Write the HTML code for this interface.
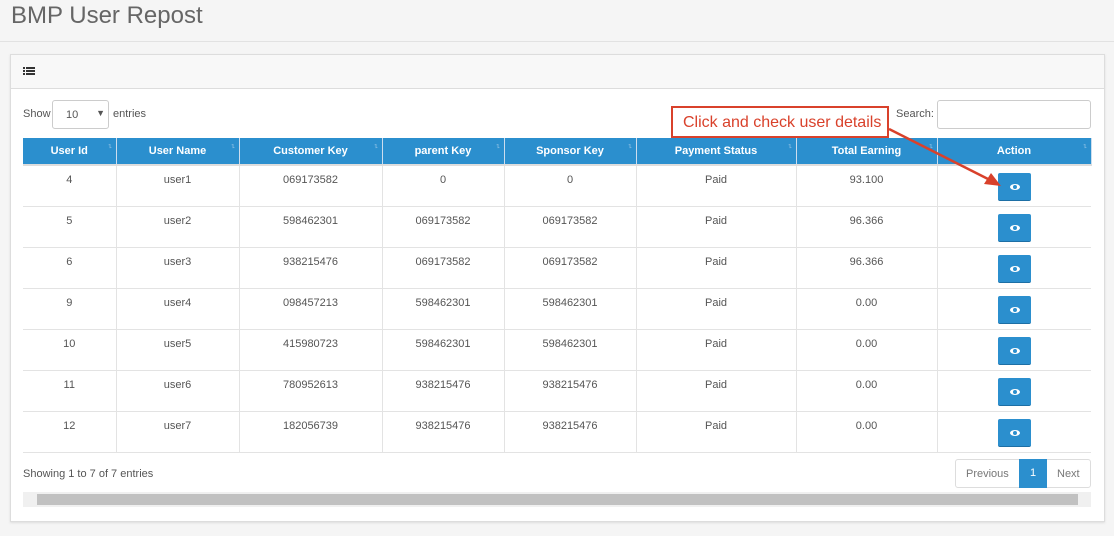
<!DOCTYPE html><html><head><style>
body{margin:0;width:1114px;height:536px;background:#f5f5f5;font-family:"Liberation Sans",sans-serif;position:relative;overflow:hidden;color:#555}
.t{position:absolute;left:11px;top:2px;font-size:24px;color:#666;}
.hl{position:absolute;left:0;top:41px;width:1114px;height:1px;background:#e2e2e2}
.p{position:absolute;left:10px;top:54px;width:1093px;height:466px;background:#fff;border:1px solid #ddd;box-shadow:0 1px 2px #ddd}
.ph{position:absolute;left:0;top:0;width:1093px;height:33px;background:#f8f8f8;border-bottom:1px solid #ddd}
.a{position:absolute;font-size:11px;color:#555}
table{position:absolute;left:23px;top:138px;border-collapse:collapse;font-size:11px;width:1068px;table-layout:fixed}
th{background:#2b8fce;color:#fff;height:26px;border-right:1px solid #cde;font-weight:bold;text-align:center;padding:0;border-bottom:2px solid #ddd;position:relative}
th:after{content:"↑↓";position:absolute;right:5px;top:5px;font-size:7px;color:#9cc8e8;letter-spacing:-2px}
td{height:41px;border:1px solid #e3e3e3;text-align:center;vertical-align:top;padding:8px 0 0;box-sizing:border-box;color:#555}
td:first-child{border-left:0}td:last-child{border-right:0}
.b{display:inline-block;width:33px;height:28px;background:#2b8fce;border-radius:2px;margin-top:-1px;border-bottom:1px solid #1d6fa5;box-sizing:border-box;position:relative}
.b:before{content:"";position:absolute;left:12px;top:11px;width:10px;height:6px;border-radius:50%;background:#fff}
.b:after{content:"";position:absolute;left:15px;top:12px;width:4px;height:4px;border-radius:50%;background:#2b8fce}
</style></head><body>
<div class="t">BMP User Repost</div><div class="hl"></div>
<div class="p"><div class="ph"><svg style="position:absolute;left:12px;top:12px" width="12" height="10"><g fill="#333"><rect x="0" y="0" width="2" height="2"/><rect x="3" y="0" width="9" height="2"/><rect x="0" y="3" width="2" height="2"/><rect x="3" y="3" width="9" height="2"/><rect x="0" y="6" width="2" height="2"/><rect x="3" y="6" width="9" height="2"/></g></svg></div></div>
<div class="a" style="left:23px;top:108px">Show</div>
<div style="position:absolute;left:52px;top:100px;width:57px;height:29px;border:1px solid #ccc;border-radius:3px;background:#fff;box-sizing:border-box;font-size:11px;padding:8px 0 0 13px">10<span style="position:absolute;right:3px;top:7px;font-size:9px">▼</span></div>
<div class="a" style="left:113px;top:108px">entries</div>
<div class="a" style="left:896px;top:108px">Search:</div>
<div style="position:absolute;left:937px;top:100px;width:154px;height:29px;border:1px solid #ccc;border-radius:3px;background:#fff;box-sizing:border-box"></div>
<table><colgroup><col style="width:93px"><col style="width:123px"><col style="width:143px"><col style="width:122px"><col style="width:132px"><col style="width:160px"><col style="width:141px"><col style="width:154px"></colgroup>
<tr><th>User Id</th><th>User Name</th><th>Customer Key</th><th>parent Key</th><th>Sponsor Key</th><th>Payment Status</th><th>Total Earning</th><th>Action</th></tr>
<tr><td>4</td><td>user1</td><td>069173582</td><td>0</td><td>0</td><td>Paid</td><td>93.100</td><td><span class="b"></span></td></tr>
<tr><td>5</td><td>user2</td><td>598462301</td><td>069173582</td><td>069173582</td><td>Paid</td><td>96.366</td><td><span class="b"></span></td></tr>
<tr><td>6</td><td>user3</td><td>938215476</td><td>069173582</td><td>069173582</td><td>Paid</td><td>96.366</td><td><span class="b"></span></td></tr>
<tr><td>9</td><td>user4</td><td>098457213</td><td>598462301</td><td>598462301</td><td>Paid</td><td>0.00</td><td><span class="b"></span></td></tr>
<tr><td>10</td><td>user5</td><td>415980723</td><td>598462301</td><td>598462301</td><td>Paid</td><td>0.00</td><td><span class="b"></span></td></tr>
<tr><td>11</td><td>user6</td><td>780952613</td><td>938215476</td><td>938215476</td><td>Paid</td><td>0.00</td><td><span class="b"></span></td></tr>
<tr><td>12</td><td>user7</td><td>182056739</td><td>938215476</td><td>938215476</td><td>Paid</td><td>0.00</td><td><span class="b"></span></td></tr>
</table>
<svg style="position:absolute;left:0;top:0" width="1114" height="536">
<line x1="889" y1="129" x2="990" y2="180" stroke="#d9412b" stroke-width="2.5"/><polygon points="1001,186 984,184 991,173" fill="#d9412b"/></svg>
<div style="position:absolute;left:671px;top:106px;width:218px;height:32px;border:2px solid #d9412b;background:#fff;box-sizing:border-box;color:#d9412b;font-size:16px;padding:6px 0 0 10px">Click and check user details</div>
<div class="a" style="left:23px;top:468px">Showing 1 to 7 of 7 entries</div>
<div style="position:absolute;left:955px;top:459px;width:136px;height:29px;border:1px solid #ddd;border-radius:3px;box-sizing:border-box;font-size:11px;color:#777">
<span style="position:absolute;left:10px;top:8px">Previous</span><span style="position:absolute;left:63px;top:-1px;width:28px;height:29px;background:#2b8fce;color:#fff;text-align:center;line-height:29px">1</span><span style="position:absolute;left:101px;top:8px">Next</span></div>
<div style="position:absolute;left:23px;top:492px;width:1068px;height:15px;background:#f0f0f0"><div style="position:absolute;left:14px;top:2px;width:1041px;height:11px;background:#c1c1c1"></div></div>
</body></html>
